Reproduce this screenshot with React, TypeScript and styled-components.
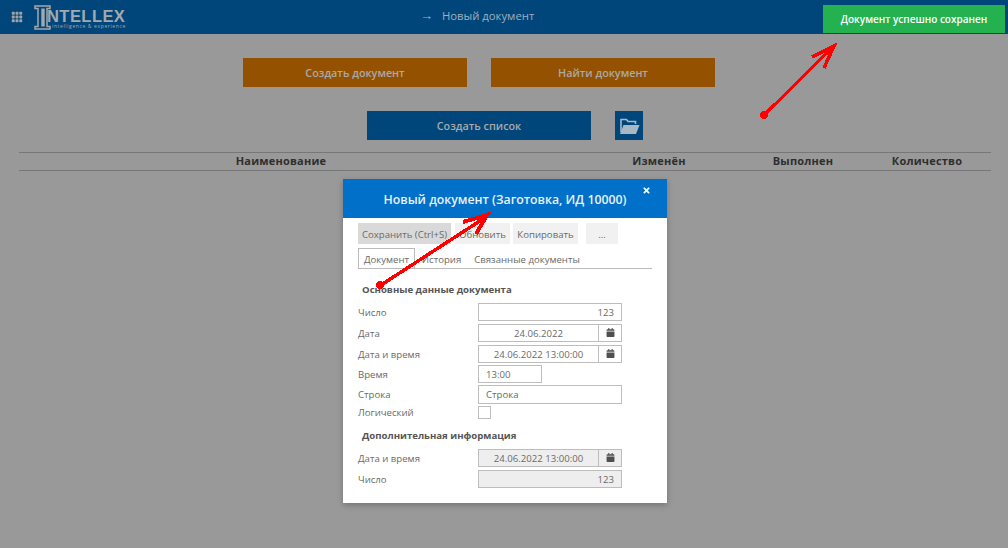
import * as React from 'react';
import styled, { createGlobalStyle } from 'styled-components';
import { FaCalendar, FaTimes } from 'react-icons/fa';
import { BsGrid3X3GapFill } from 'react-icons/bs';

const GlobalStyle = createGlobalStyle`
  html, body {
    margin: 0;
    padding: 0;
    background: #999;
    font-family: 'Open Sans', 'Liberation Sans', sans-serif;
    overflow: hidden;
  }
  * { box-sizing: border-box; }
`;

const Page = styled.div`
  position: relative;
  width: 1008px;
  height: 548px;
  background: #999;
  overflow: hidden;
`;

const Header = styled.header`
  height: 34px;
  background: #00467a;
  display: flex;
  align-items: center;
  padding-left: 11px;
  color: #a3a3a3;
`;

const Logo = styled.div`
  display: flex;
  align-items: flex-start;
  margin-left: 11px;
  height: 34px;
  padding-top: 5px;
  svg { display: block; flex: none; }
`;

const LogoText = styled.div`
  margin-left: -4px;
  display: flex;
  flex-direction: column;
`;

const LogoName = styled.span`
  font-family: 'Liberation Sans', sans-serif;
  font-weight: 700;
  font-size: 16.5px;
  line-height: 13px;
  margin-top: 5px;
  letter-spacing: 0.45px;
  color: #a3a9ae;
`;

const LogoTag = styled.span`
  font-size: 5px;
  line-height: 5px;
  letter-spacing: 0.62px;
  margin-left: 5px;
  margin-top: 1px;
  white-space: nowrap;
  color: #a3a9ae;
`;

const HeaderTitle = styled.div`
  margin-left: 294px;
  padding-bottom: 3px;
  font-size: 11.3px;
  color: #9eb0bf;
  display: flex;
  gap: 9px;
  align-items: center;
`;

const HeaderArrow = styled.span`
  font-size: 13px;
  line-height: 13px;
`;

const Toast = styled.div`
  position: absolute;
  left: 823px;
  top: 5px;
  width: 182px;
  height: 28px;
  background: #23b24f;
  color: #fff;
  font-size: 10px;
  font-weight: 600;
  display: flex;
  align-items: center;
  justify-content: center;
`;

const Main = styled.main`
  padding: 24px 17px 0 19px;
`;

const ButtonRow = styled.div<{ $top?: number; $shift?: number }>`
  display: flex;
  justify-content: center;
  gap: 24px;
  margin-top: ${(p) => p.$top ?? 0}px;
  padding-right: ${(p) => p.$shift ?? 0}px;
`;

const BigButton = styled.div<{ $color: string }>`
  width: 224px;
  height: 29px;
  background: ${(p) => p.$color};
  color: #a9a9a9;
  font-size: 10.8px;
  font-weight: 600;
  display: flex;
  align-items: center;
  justify-content: center;
`;

const FolderButton = styled.div`
  width: 28px;
  height: 29px;
  background: #00467a;
  display: flex;
  align-items: center;
  justify-content: center;
`;

const TableHead = styled.div`
  margin-top: 12px;
  width: 972px;
  height: 19px;
  padding-bottom: 2px;
  border-top: 1px solid #777;
  border-bottom: 1px solid #777;
  display: grid;
  grid-template-columns: 556px 168px 120px 128px;
  align-items: center;
  font-size: 11px;
  font-weight: 700;
  letter-spacing: 0.2px;
  color: #2e2e2e;
`;

const HeadCell = styled.div<{ $shift?: number }>`
  text-align: center;
  padding-right: ${(p) => p.$shift ?? 0}px;
`;

const Modal = styled.section`
  position: absolute;
  left: 343px;
  top: 179px;
  width: 324px;
  height: 324px;
  background: #fff;
  box-shadow: 0 2px 6px rgba(0, 0, 0, 0.25);
  font-size: 9.6px;
  color: #6a6a6a;
`;

const ModalHeader = styled.div`
  position: relative;
  height: 39px;
  background: #0070c8;
  color: #e8f2fa;
  font-size: 12.3px;
  font-weight: 600;
  display: flex;
  align-items: center;
  justify-content: center;
  padding-top: 2px;
`;

const CloseIcon = styled.span`
  position: absolute;
  right: 16px;
  top: 7px;
  color: #fff;
  font-size: 9px;
  line-height: 9px;
`;

const ModalBody = styled.div`
  padding: 5px 15px 0;
`;

const Toolbar = styled.div`
  display: flex;
  height: 21px;
`;

const ToolButton = styled.div<{ $w: number; $gap: number; $active?: boolean }>`
  width: ${(p) => p.$w}px;
  margin-right: ${(p) => p.$gap}px;
  background: ${(p) => (p.$active ? '#d9d9d9' : '#f1f1f1')};
  display: flex;
  align-items: center;
  justify-content: center;
  padding-top: 1px;
  white-space: nowrap;
`;

const Tabs = styled.div`
  display: flex;
  height: 21px;
  margin-top: 4px;
  width: 294px;
  border-bottom: 1px solid #bbb;
`;

const Tab = styled.div<{ $active?: boolean; $w: number }>`
  width: ${(p) => p.$w}px;
  height: 20px;
  display: flex;
  align-items: center;
  justify-content: center;
  padding-top: 1px;
  white-space: nowrap;
  border: 1px solid ${(p) => (p.$active ? '#bbb' : 'transparent')};
  border-bottom: none;
`;

const SectionTitle = styled.div<{ $top: number }>`
  margin-top: ${(p) => p.$top}px;
  padding-left: 4px;
  height: 14px;
  line-height: 14px;
  font-weight: 700;
  font-size: 9.6px;
  color: #555;
`;

const Row = styled.div<{ $top: number; $h?: number }>`
  display: flex;
  align-items: center;
  margin-top: ${(p) => p.$top}px;
  height: ${(p) => p.$h ?? 18}px;
`;

const Label = styled.div`
  width: 120px;
  flex: none;
`;

const Field = styled.div<{ $w?: number; $align?: string; $off?: boolean }>`
  width: ${(p) => p.$w ?? 144}px;
  height: 100%;
  border: 1px solid #bdbdbd;
  background: ${(p) => (p.$off ? '#eee' : '#fff')};
  display: flex;
  align-items: center;
  justify-content: ${(p) => p.$align ?? 'flex-start'};
  padding: 0 7px;
`;

const DateField = styled.div<{ $off?: boolean }>`
  width: 144px;
  height: 100%;
  border: 1px solid #bdbdbd;
  background: ${(p) => (p.$off ? '#eee' : '#fff')};
  display: flex;
  align-items: center;
`;

const DateValue = styled.div`
  flex: 1;
  text-align: center;
`;

const DateButton = styled.div`
  width: 23px;
  height: 100%;
  border-left: 1px solid #bdbdbd;
  padding-bottom: 2px;
  display: flex;
  align-items: center;
  justify-content: center;
  color: #4f4f4f;
  font-size: 9px;
`;

const Checkbox = styled.div`
  width: 13px;
  height: 13px;
  border: 1px solid #bdbdbd;
`;

const ArrowLayer = styled.svg`
  position: absolute;
  left: 0;
  top: 0;
  pointer-events: none;
`;

const CalendarIcon: React.FC = () => (
  <DateButton>
    <FaCalendar />
  </DateButton>
);

const App: React.FC = () => {
  return (
    <Page>
      <GlobalStyle />
      <Header>
        <BsGrid3X3GapFill size={12} />
        <Logo>
          <svg width="17" height="25" viewBox="0 0 17 25" fill="none" stroke="#a3a9ae" strokeWidth="1.5">
            <path d="M1 1h15v2.5h-3v18h3V24H1v-2.5h3v-18H1z" />
            <path d="M9 3.5v18" strokeWidth="3.4" />
          </svg>
          <LogoText>
            <LogoName>NTELLEX</LogoName>
            <LogoTag>intelligence &amp; experience</LogoTag>
          </LogoText>
        </Logo>
        <HeaderTitle>
          <HeaderArrow>→</HeaderArrow>
          <span>Новый документ</span>
        </HeaderTitle>
      </Header>
      <Toast>Документ успешно сохранен</Toast>
      <Main>
        <ButtonRow $shift={52}>
          <BigButton $color="#945200">Создать документ</BigButton>
          <BigButton $color="#945200">Найти документ</BigButton>
        </ButtonRow>
        <ButtonRow $top={24}>
          <BigButton $color="#00467a">Создать список</BigButton>
          <FolderButton>
            <svg width="21" height="18" viewBox="0 0 21 18" fill="none">
              <path d="M2 15V2.5h5.5l1.5 2h7.5V7" stroke="#a8b8c5" strokeWidth="1.6" />
              <path d="M4.5 8H20.5L17 17H1z" fill="#a8b8c5" />
            </svg>
          </FolderButton>
        </ButtonRow>
        <TableHead>
          <HeadCell $shift={32}>Наименование</HeadCell>
          <HeadCell>Изменён</HeadCell>
          <HeadCell>Выполнен</HeadCell>
          <HeadCell>Количество</HeadCell>
        </TableHead>
      </Main>
      <Modal>
        <ModalHeader>
          Новый документ (Заготовка, ИД 10000)
          <CloseIcon>
            <FaTimes />
          </CloseIcon>
        </ModalHeader>
        <ModalBody>
          <Toolbar>
            <ToolButton $w={93} $gap={4} $active>
              Сохранить (Ctrl+S)
            </ToolButton>
            <ToolButton $w={55} $gap={3}>
              Обновить
            </ToolButton>
            <ToolButton $w={65} $gap={8}>
              Копировать
            </ToolButton>
            <ToolButton $w={32} $gap={0}>
              ...
            </ToolButton>
          </Toolbar>
          <Tabs>
            <Tab $active $w={57}>
              Документ
            </Tab>
            <Tab $w={53}>История</Tab>
            <Tab $w={6} />
            <Tab $w={106}>Связанные документы</Tab>
          </Tabs>
          <SectionTitle $top={14}>Основные данные документа</SectionTitle>
          <Row $top={6}>
            <Label>Число</Label>
            <Field $align="flex-end">123</Field>
          </Row>
          <Row $top={3}>
            <Label>Дата</Label>
            <DateField>
              <DateValue>24.06.2022</DateValue>
              <CalendarIcon />
            </DateField>
          </Row>
          <Row $top={3}>
            <Label>Дата и время</Label>
            <DateField>
              <DateValue>24.06.2022 13:00:00</DateValue>
              <CalendarIcon />
            </DateField>
          </Row>
          <Row $top={2}>
            <Label>Время</Label>
            <Field $w={64}>13:00</Field>
          </Row>
          <Row $top={2} $h={19}>
            <Label>Строка</Label>
            <Field>Строка</Field>
          </Row>
          <Row $top={2} $h={13}>
            <Label>Логический</Label>
            <Checkbox />
          </Row>
          <SectionTitle $top={10}>Дополнительная информация</SectionTitle>
          <Row $top={6}>
            <Label>Дата и время</Label>
            <DateField $off>
              <DateValue>24.06.2022 13:00:00</DateValue>
              <CalendarIcon />
            </DateField>
          </Row>
          <Row $top={3}>
            <Label>Число</Label>
            <Field $align="flex-end" $off>
              123
            </Field>
          </Row>
        </ModalBody>
      </Modal>
      <ArrowLayer width="1008" height="548" viewBox="0 0 1008 548" fill="none" stroke="#fe0000" shapeRendering="crispEdges">
        <circle cx="764" cy="115" r="4" fill="#fe0000" stroke="none" />
        <path d="M765 114L833 47" strokeWidth="3" />
        <path d="M812 57L834 46L824 68" strokeWidth="3.5" />
        <circle cx="380" cy="285" r="4" fill="#fe0000" stroke="none" />
        <path d="M381 285L486 217" strokeWidth="3.5" />
        <path d="M463 222L487 215L476 234" strokeWidth="4" />
      </ArrowLayer>
    </Page>
  );
};

export default App;
